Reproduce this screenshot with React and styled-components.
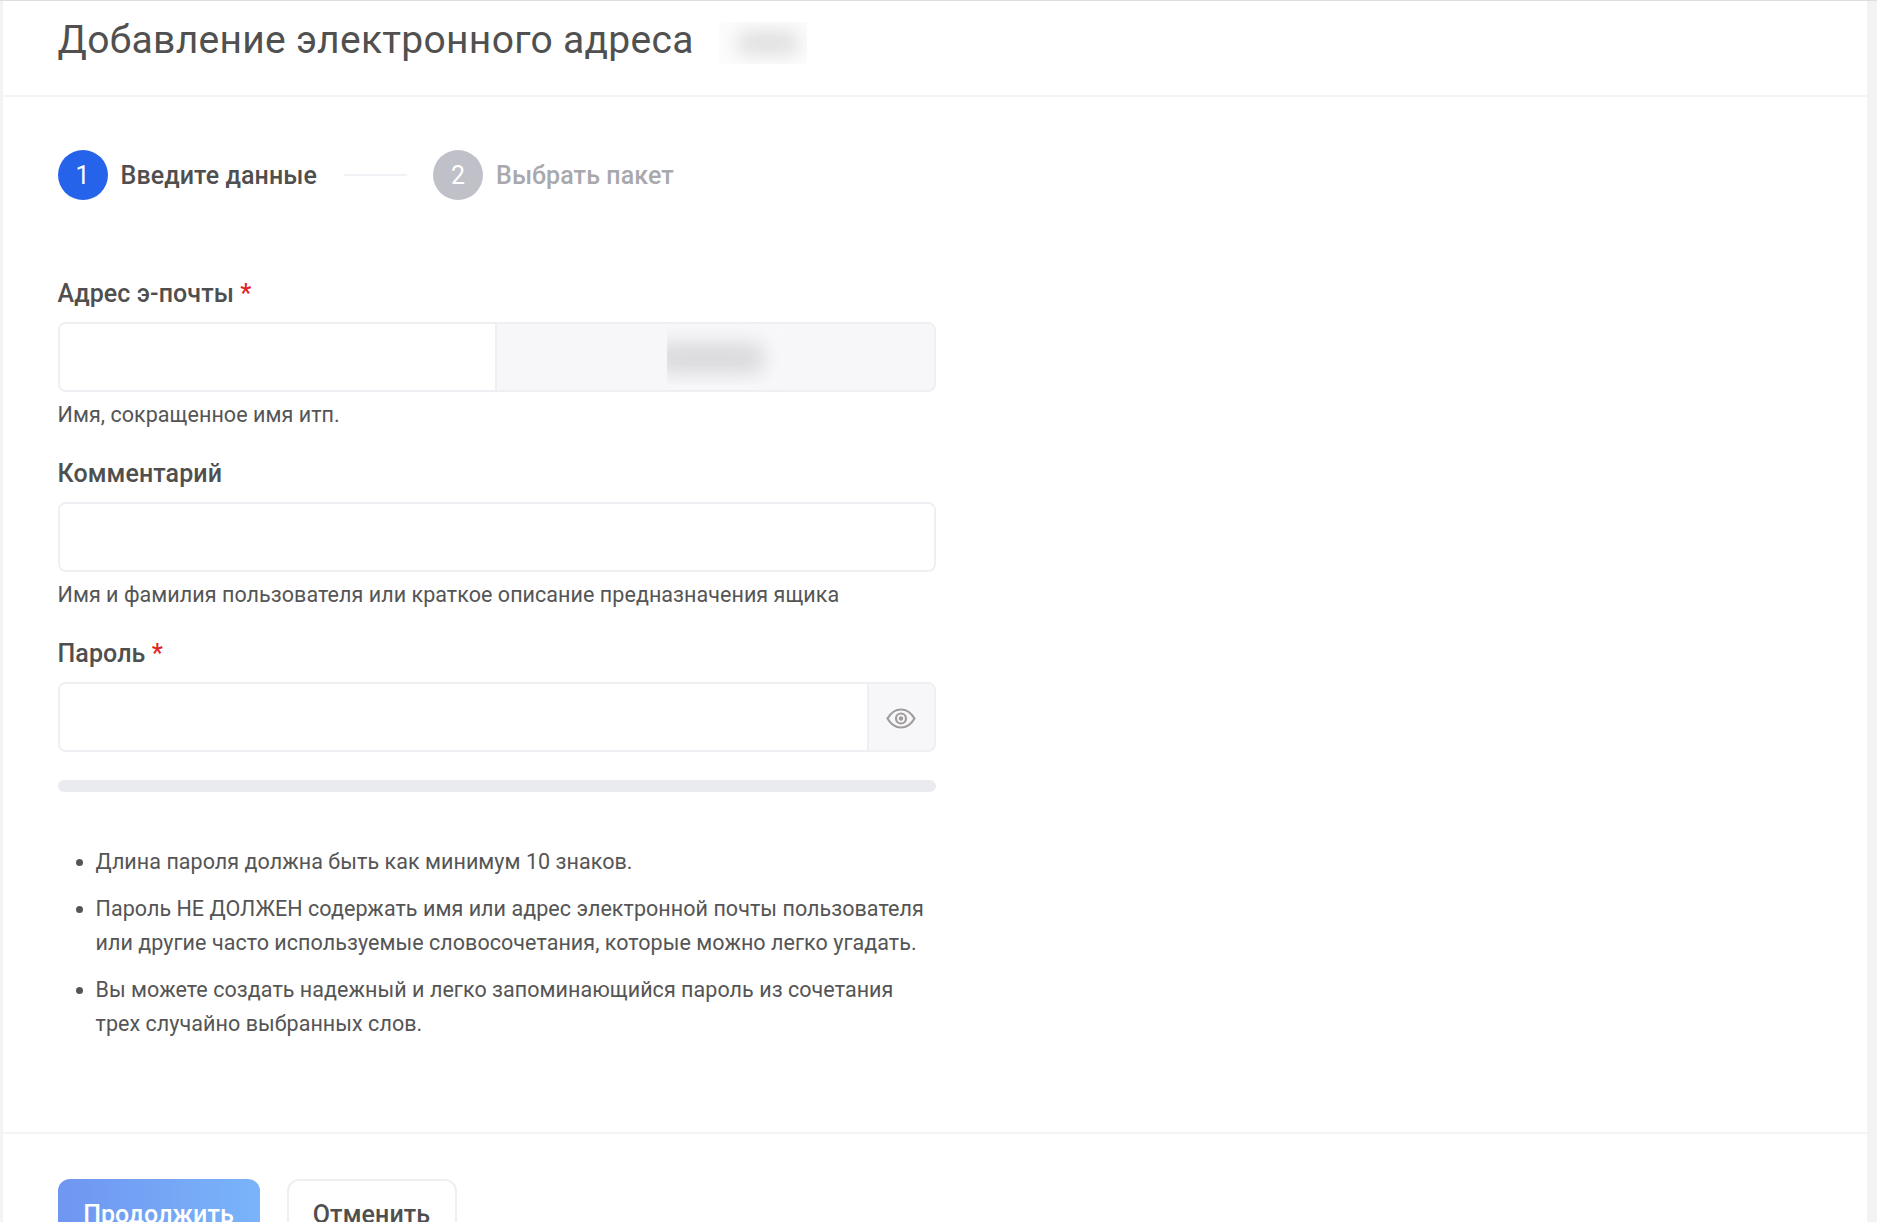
import React from 'react'
import styled, { createGlobalStyle } from 'styled-components'

const GlobalStyle = createGlobalStyle`
  html, body {
    margin: 0;
    padding: 0;
    height: 100%;
    overflow: hidden;
  }
  body {
    font-family: Roboto, "Noto Sans", sans-serif;
    color: #4f4f4f;
  }
  * { box-sizing: border-box; }
`

const Page = styled.div`
  height: 100vh;
  overflow: hidden;
  background: #f3f3f6;
  border-top: 1px solid #dedede;
  padding: 0 10px 0 3px;
`

const Panel = styled.main`
  background: #fff;
  min-height: 100%;
`

const Header = styled.header`
  height: 96px;
  border-bottom: 2px solid #f4f4f7;
  padding: 0 54.5px;
  display: flex;
  align-items: flex-start;
  gap: 25px;
`

const Title = styled.h1`
  margin: 16px 0 0;
  font-size: 39px;
  line-height: 46px;
  font-weight: 400;
  letter-spacing: 0.3px;
  color: #505050;
`

const Blurred = styled.div`
  width: ${p => p.$w}px;
  height: ${p => p.$h}px;
  overflow: hidden;
  position: relative;
  background: #fcfcfc;
  &::after {
    content: '';
    position: absolute;
    inset: ${p => p.$inset};
    background: #c4c4c6;
    border-radius: 10px;
    filter: blur(${p => p.$blur}px);
    opacity: ${p => p.$o};
  }
`

const HeaderBlur = styled(Blurred)`
  margin-top: 21px;
`

const DomainBlur = styled(Blurred)`
  margin-top: 1px;
  background: #f8f8fa;
`

const Steps = styled.ol`
  list-style: none;
  margin: 0;
  padding: 53px 54.5px 0;
  display: flex;
  align-items: center;
`

const Step = styled.li`
  display: flex;
  align-items: center;
  gap: 13px;
  font-size: 25px;
  letter-spacing: 0.1px;
  font-weight: 500;
  color: ${p => (p.$active ? '#4f4f4f' : '#a9a9ad')};
`

const StepNumber = styled.span`
  width: 50px;
  height: 50px;
  border-radius: 50%;
  display: flex;
  align-items: center;
  justify-content: center;
  color: #fff;
  font-weight: 400;
  background: ${p => (p.$active ? '#2563eb' : '#c0c0c9')};
`

const StepLine = styled.span`
  width: 63px;
  height: 2px;
  margin: 0 26px 0 27px;
  background: #f1f1f6;
`

const Form = styled.form`
  width: 878.5px;
  margin: 0 54.5px;
  padding-top: 79px;
`

const Label = styled.label`
  display: block;
  font-size: 25px;
  line-height: 30px;
  letter-spacing: 0.1px;
  font-weight: 500;
  color: #4f4f4f;
  margin-bottom: 13px;
`

const Required = styled.span`
  color: #e02424;
`

const FieldBox = styled.div`
  display: flex;
  height: 70px;
  border: 2px solid #efeff3;
  border-radius: 8px;
  overflow: hidden;
`

const TextInput = styled.input`
  flex: 1;
  min-width: 0;
  border: 0;
  outline: 0;
  padding: 0 16px;
  font: inherit;
  background: #fff;
`

const Domain = styled.div`
  width: 439px;
  flex: none;
  border-left: 2px solid #efeff3;
  background: #f7f7f9;
  padding-left: 170px;
`

const Hint = styled.p`
  margin: 8px 0 0;
  font-size: 21.5px;
  line-height: 30px;
  letter-spacing: 0.05px;
  color: #555;
`

const Field = styled.div`
  margin-bottom: 29px;
`

const EyeButton = styled.div`
  width: 67px;
  flex: none;
  border-left: 2px solid #efeff3;
  background: #f7f7f9;
  display: flex;
  align-items: center;
  justify-content: center;
  padding: 2px 2px 0 0;
  color: #a09c9c;
`

const StrengthBar = styled.div`
  height: 12px;
  margin-top: 28px;
  border-radius: 6px;
  background: #e9ebef;
`

const Rules = styled.ul`
  margin: 53px 0 0;
  padding: 0 0 0 38px;
  font-size: 21.5px;
  letter-spacing: 0.05px;
  line-height: 34px;
  color: #555;
`

const Rule = styled.li`
  margin-bottom: 13px;
`

const Footer = styled.footer`
  margin-top: 91px;
  border-top: 2px solid #f4f4f7;
  padding: 45px 54.5px 0;
  display: flex;
  gap: 27px;
`

const PrimaryButton = styled.button`
  width: 202px;
  height: 70px;
  border: 0;
  border-radius: 12px;
  background: linear-gradient(90deg, #6f96f1, #7ab4fa);
  color: #fff;
  font: 500 25px Roboto, sans-serif;
  letter-spacing: 0.1px;
`

const SecondaryButton = styled.button`
  width: 170px;
  height: 70px;
  border: 2px solid #efeff3;
  border-radius: 12px;
  background: #fff;
  color: #4f4f4f;
  font: 500 25px Roboto, sans-serif;
  letter-spacing: 0.1px;
`

function EyeIcon() {
  return (
    <svg width="30" height="21" viewBox="0 0 30 21" fill="none" stroke="currentColor" strokeWidth="2.2">
      <path d="M1.5 10.5C5 4.500 9.500 1.500 15 1.500S25 4.500 28.500 10.500C25 16.500 20.500 19.500 15 19.500S5 16.500 1.500 10.500Z" />
      <circle cx="15" cy="10.5" r="5" />
      <circle cx="15" cy="10.5" r="2.2" fill="currentColor" stroke="none" />
    </svg>
  )
}

export default function App() {
  return (
    <Page>
      <GlobalStyle />
      <Panel>
        <Header>
          <Title>Добавление электронного адреса</Title>
          <HeaderBlur $w={88} $h={42} $inset="9px 8px 9px 18px" $blur={9} $o={0.5} />
        </Header>

        <Steps>
          <Step $active>
            <StepNumber $active>1</StepNumber>
            Введите данные
          </Step>
          <StepLine />
          <Step>
            <StepNumber>2</StepNumber>
            Выбрать пакет
          </Step>
        </Steps>

        <Form>
          <Field>
            <Label>Адрес э-почты <Required>*</Required></Label>
            <FieldBox>
              <TextInput />
              <Domain>
                <DomainBlur $w={115} $h={60} $inset="18px 18px 12px -12px" $blur={10} $o={0.6} />
              </Domain>
            </FieldBox>
            <Hint>Имя, сокращенное имя итп.</Hint>
          </Field>
          <Field>
            <Label>Комментарий</Label>
            <FieldBox>
              <TextInput />
            </FieldBox>
            <Hint>Имя и фамилия пользователя или краткое описание предназначения ящика</Hint>
          </Field>
          <Label>Пароль <Required>*</Required></Label>
          <FieldBox>
            <TextInput />
            <EyeButton><EyeIcon /></EyeButton>
          </FieldBox>
          <StrengthBar />
          <Rules>
            <Rule>Длина пароля должна быть как минимум 10 знаков.</Rule>
            <Rule>Пароль НЕ ДОЛЖЕН содержать имя или адрес электронной почты пользователя или другие часто используемые словосочетания, которые можно легко угадать.</Rule>
            <Rule>Вы можете создать надежный и легко запоминающийся пароль из сочетания трех случайно выбранных слов.</Rule>
          </Rules>
        </Form>

        <Footer>
          <PrimaryButton type="button">Продолжить</PrimaryButton>
          <SecondaryButton type="button">Отменить</SecondaryButton>
        </Footer>
      </Panel>
    </Page>
  )
}
